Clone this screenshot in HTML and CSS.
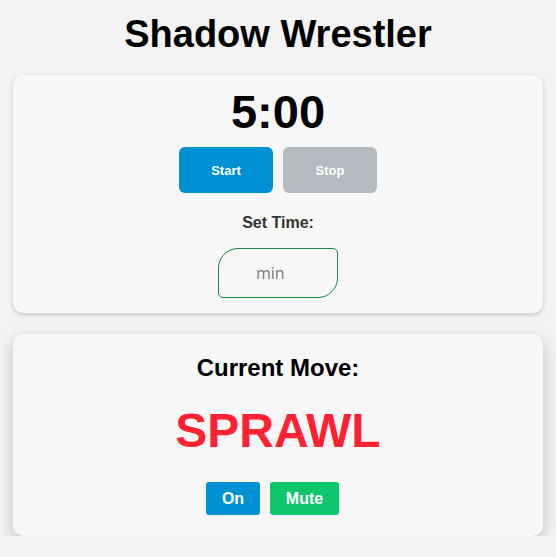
FILE: index.html
```html
<!DOCTYPE html>
<html lang="en">
<head>
<meta charset="utf-8">
<title>Shadow Wrestler</title>
<link rel="stylesheet" href="styles.css">
</head>
<body>
<main class="app">
  <h1 class="title">Shadow Wrestler</h1>
  <section class="card timer-card">
    <div class="clock">5:00</div>
    <div class="btn-row">
      <button class="btn btn-start">Start</button>
      <button class="btn btn-stop">Stop</button>
    </div>
    <label class="set-label" for="minutes">Set Time:</label>
    <input id="minutes" class="time-input" type="number" placeholder="min">
  </section>
  <section class="card move-card">
    <h2 class="move-label">Current Move:</h2>
    <div class="move">SPRAWL</div>
    <div class="sound-row">
      <button class="small-btn btn-on">On</button>
      <button class="small-btn btn-mute">Mute</button>
    </div>
  </section>
</main>
</body>
</html>
```

FILE: styles.css
```css
* { box-sizing: border-box; }
html, body { margin: 0; padding: 0; }
body {
  background: #f3f3f3;
  font-family: "Liberation Sans", Arial, sans-serif;
  color: #000;
}
.app {
  padding: 0 13px;
  display: flex;
  flex-direction: column;
  gap: 21px;
}
.title {
  margin: 0;
  padding-top: 12px;
  height: 54px;
  font-size: 38px;
  line-height: 44px;
  text-align: center;
  font-weight: 700;
}
.card {
  background: #f7f7f7;
  border-radius: 10px;
  display: flex;
  flex-direction: column;
  align-items: center;
}
.timer-card {
  padding: 12px 0 15px;
  box-shadow: 0 2px 5px rgba(0,0,0,0.18);
}
.clock {
  font-size: 47px;
  font-weight: 700;
  line-height: 50px;
  margin-bottom: 10px;
}
.btn-row {
  display: flex;
  gap: 10px;
}
.btn {
  width: 94px;
  height: 46px;
  border: none;
  border-radius: 6px;
  color: #fff;
  font-family: "Liberation Sans", Arial, sans-serif;
  font-weight: 700;
  font-size: 13px;
}
.btn-start { background: #0090d4; }
.btn-stop { background: #b4babd; }
.set-label {
  margin-top: 21px;
  font-size: 16px;
  font-weight: 700;
  color: #333;
  line-height: 18px;
}
.time-input {
  margin-top: 16px;
  width: 120px;
  height: 50px;
  border: 1px solid #16884c;
  border-radius: 20px 5px 20px 5px;
  background: transparent;
  padding: 0 0 0 37px;
  font-family: "Open Sans", sans-serif;
  font-size: 16px;
  color: #555;
  outline: none;
}
.time-input::placeholder { color: #777; }
.move-card {
  padding: 20px 0 21px;
  box-shadow: 0 6px 16px rgba(0,0,0,0.22);
}
.move-label {
  margin: 0;
  font-size: 24px;
  line-height: 28px;
  font-weight: 700;
}
.move {
  margin-top: 22px;
  font-size: 48px;
  line-height: 54px;
  font-weight: 700;
  color: #ff2233;
}
.sound-row {
  margin-top: 24px;
  padding-right: 11px;
  display: flex;
  gap: 10px;
}
.small-btn {
  height: 33px;
  border: none;
  border-radius: 3px;
  color: #fff;
  font-family: "Liberation Sans", Arial, sans-serif;
  font-weight: 700;
  font-size: 16px;
}
.btn-on { width: 54px; background: #0090d4; }
.btn-mute { width: 69px; background: #10c66c; }
```
